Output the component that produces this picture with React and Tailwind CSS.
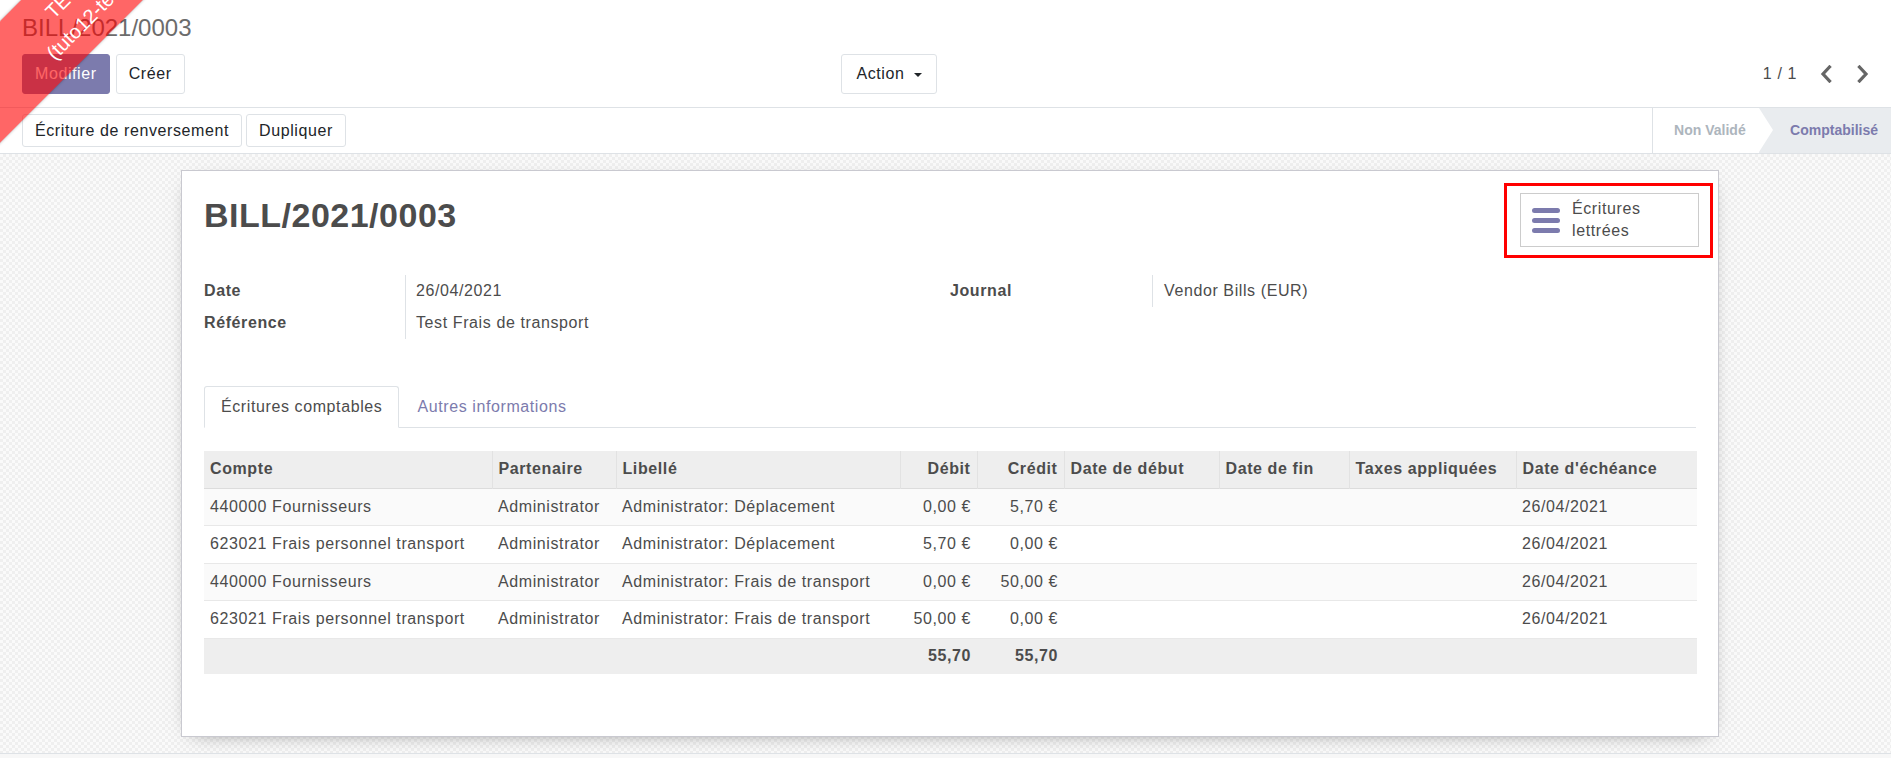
import React from 'react';

const lines = [
  { compte: '440000 Fournisseurs', libelle: 'Administrator: Déplacement', debit: '0,00 €', credit: '5,70 €' },
  { compte: '623021 Frais personnel transport', libelle: 'Administrator: Déplacement', debit: '5,70 €', credit: '0,00 €' },
  { compte: '440000 Fournisseurs', libelle: 'Administrator: Frais de transport', debit: '0,00 €', credit: '50,00 €' },
  { compte: '623021 Frais personnel transport', libelle: 'Administrator: Frais de transport', debit: '50,00 €', credit: '0,00 €' },
];

const Chevron = ({ dir }) => (
  <svg width="12" height="18" viewBox="0 0 12 18" fill="none">
    <polyline
      points={dir === 'left' ? '9.5,2 3,9 9.5,16' : '2.5,2 9,9 2.5,16'}
      stroke="#666"
      strokeWidth="3.2"
      strokeLinecap="square"
    />
  </svg>
);

const App = () => {
  return (
    <div className="relative min-h-[758px] overflow-hidden bg-white font-['Liberation_Sans',Arial,sans-serif] text-[16px] tracking-[0.6px] text-[#4c4c4c]">
      {/* test ribbon */}
      <div className="pointer-events-none absolute left-[-124px] top-[-37px] z-50 flex h-[86px] w-[400px] -rotate-45 flex-col items-center justify-center bg-[rgba(255,0,0,0.6)] pt-[4px] text-[20px] leading-[30px] tracking-normal text-white shadow-[0_0_3px_rgba(0,0,0,0.3)]">
        <span>TEST</span>
        <span>(tuto12-test)</span>
      </div>

      {/* control panel */}
      <div className="h-[108px] border-b border-[#dee2e6] px-[22px] pt-[13px]">
        <div className="text-[24px] leading-[30px] tracking-normal text-[#6c6c6c]">BILL/2021/0003</div>
        <div className="mt-[11px] flex h-[40px] items-center">
          <div className="flex w-[819px] gap-[6px]">
            <button className="h-[40px] rounded-[3px] border border-[#7c7bad] bg-[#7c7bad] px-[12px] text-white">Modifier</button>
            <button className="h-[40px] rounded-[3px] border border-[#dee2e6] bg-white px-[12px] text-[#212529]">Créer</button>
          </div>
          <button className="flex h-[40px] w-[96px] items-center justify-center gap-[9px] rounded-[3px] border border-[#dee2e6] bg-white text-[#212529]">
            Action
            <span className="mt-[1px] h-0 w-0 border-x-[4px] border-t-[4px] border-x-transparent border-t-[#212529]"></span>
          </button>
          <div className="-mr-[12px] ml-auto flex items-center">
            <span className="mr-[10px] text-[#4c4c4c]">1 / 1</span>
            <button className="flex h-[40px] w-[37px] items-center justify-center"><Chevron dir="left" /></button>
            <button className="flex h-[40px] w-[37px] items-center justify-center"><Chevron dir="right" /></button>
          </div>
        </div>
      </div>

      <div className="flex h-[46px] items-center border-b border-[#dee2e6] pl-[22px]">
        <div className="flex gap-[4px]">
          <button className="h-[33px] rounded-[3px] border border-[#dee2e6] bg-white px-[12px] text-[#212529]">Écriture de renversement</button>
          <button className="h-[33px] rounded-[3px] border border-[#dee2e6] bg-white px-[12px] text-[#212529]">Dupliquer</button>
        </div>
        <div className="ml-auto flex self-stretch border-l border-[#dee2e6] text-[14px] font-bold tracking-normal">
          <div className="relative flex w-[106px] items-center pl-[21px] text-[#adb5bd]">
            Non Validé
            <span className="absolute right-[-14px] top-0 z-10 h-0 w-0 border-y-[22.5px] border-l-[14px] border-y-transparent border-l-white"></span>
          </div>
          <div className="flex items-center bg-[#e9ecef] pl-[31px] pr-[13px] text-[#7c7bad]">Comptabilisé</div>
        </div>
      </div>

      {/* form sheet */}
      <div className="bg-[#f6f6f6] bg-[image:repeating-conic-gradient(#efefef_0%_25%,#fafafa_0%_50%)] bg-[length:6px_6px] pb-[16px] pt-[16px]">
        <div className="ml-[181px] min-h-[567px] w-[1538px] border border-[#c9c9d0] bg-white px-[22px] shadow-[0_5px_20px_-12px_rgba(0,0,0,0.6)]">
          <div className="flex items-start justify-between">
            <h1 className="mt-[24px] text-[34px] font-bold leading-[40px] tracking-[0.5px] text-[#4c4c4c]">BILL/2021/0003</h1>
            <div className="-mr-[17px] mt-[12px] border-[3px] border-[#ff0000] pb-[8px] pl-[13px] pr-[11px] pt-[7px]">
              <button className="flex h-[54px] w-[179px] items-center gap-[12px] border border-[#cccccc] bg-white pl-[11px] text-left">
                <span className="flex w-[28px] flex-col gap-[5px]">
                  <span className="h-[5px] rounded-full bg-[#7c7bad]"></span>
                  <span className="h-[5px] rounded-full bg-[#7c7bad]"></span>
                  <span className="h-[5px] rounded-full bg-[#7c7bad]"></span>
                </span>
                <span className="leading-[22px] text-[#4c4c4c]">Écritures<br />lettrées</span>
              </button>
            </div>
          </div>

          <div className="mt-[17px] grid grid-cols-2">
            <div className="flex">
              <div className="w-[201px] font-bold">
                <div className="h-[32px] leading-[32px]">Date</div>
                <div className="h-[32px] leading-[32px]">Référence</div>
              </div>
              <div className="border-l border-[#dee2e6] pl-[10px]">
                <div className="h-[32px] leading-[32px]">26/04/2021</div>
                <div className="h-[32px] leading-[32px]">Test Frais de transport</div>
              </div>
            </div>
            <div className="flex items-start">
              <div className="w-[202px] font-bold">
                <div className="h-[32px] leading-[32px]">Journal</div>
              </div>
              <div className="border-l border-[#dee2e6] pl-[11px]">
                <div className="h-[32px] leading-[32px]">Vendor Bills (EUR)</div>
              </div>
            </div>
          </div>

          <div className="mt-[47px] flex h-[42px] border-b border-[#dee2e6]">
            <div className="-mb-px flex h-[42px] items-center rounded-t-[3px] border border-b-white border-[#dee2e6] bg-white px-[16px]">Écritures comptables</div>
            <div className="flex h-[41px] items-center px-[18px] text-[#7c7bad]">Autres informations</div>
          </div>

          <table className="mt-[23px] w-full table-fixed border-collapse">
            <colgroup>
              <col className="w-[288px]" />
              <col className="w-[124px]" />
              <col className="w-[284px]" />
              <col className="w-[77px]" />
              <col className="w-[87px]" />
              <col className="w-[155px]" />
              <col className="w-[130px]" />
              <col className="w-[167px]" />
              <col className="w-[181px]" />
            </colgroup>
            <thead>
              <tr className="h-[37px] border-b border-[#dcdcdc] bg-[#eeeeee] text-left font-bold">
                <th className="px-[6px]">Compte</th>
                <th className="border-l border-[#e2e2e2] px-[6px]">Partenaire</th>
                <th className="border-l border-[#e2e2e2] px-[6px]">Libellé</th>
                <th className="border-l border-[#e2e2e2] px-[6px] text-right">Débit</th>
                <th className="border-l border-[#e2e2e2] px-[6px] text-right">Crédit</th>
                <th className="border-l border-[#e2e2e2] px-[6px]">Date de début</th>
                <th className="border-l border-[#e2e2e2] px-[6px]">Date de fin</th>
                <th className="border-l border-[#e2e2e2] px-[6px]">Taxes appliquées</th>
                <th className="border-l border-[#e2e2e2] px-[6px]">Date d'échéance</th>
              </tr>
            </thead>
            <tbody>
              {lines.map((l, i) => (
                <tr key={i} className={`h-[37.5px] border-t border-[#e8e8e8] ${i % 2 === 0 ? 'bg-[#fafafa]' : 'bg-white'}`}>
                  <td className="whitespace-nowrap px-[6px]">{l.compte}</td>
                  <td className="whitespace-nowrap px-[6px]">Administrator</td>
                  <td className="whitespace-nowrap px-[6px]">{l.libelle}</td>
                  <td className="whitespace-nowrap px-[6px] text-right">{l.debit}</td>
                  <td className="whitespace-nowrap px-[6px] text-right">{l.credit}</td>
                  <td className="px-[6px]"></td>
                  <td className="px-[6px]"></td>
                  <td className="px-[6px]"></td>
                  <td className="px-[6px]">26/04/2021</td>
                </tr>
              ))}
            </tbody>
            <tfoot>
              <tr className="h-[36px] border-t border-[#e8e8e8] bg-[#eeeeee] font-bold">
                <td></td>
                <td></td>
                <td></td>
                <td className="px-[6px] text-right">55,70</td>
                <td className="px-[6px] text-right">55,70</td>
                <td></td>
                <td></td>
                <td></td>
                <td></td>
              </tr>
            </tfoot>
          </table>
        </div>
      </div>

      <div className="h-[20px] border-t border-[#dee2e6] bg-[#f7f7f7]"></div>
    </div>
  );
};

export default App;
